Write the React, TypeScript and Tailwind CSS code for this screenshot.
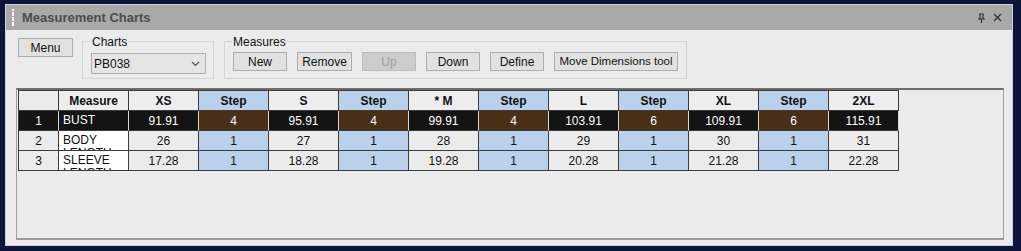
import React from "react";

const font = { fontFamily: '"Liberation Sans", Arial, sans-serif' };

const cols = ["XS", "Step", "S", "Step", "* M", "Step", "L", "Step", "XL", "Step", "2XL"];
const rows = [
  { n: "1", m: "BUST", v: ["91.91", "4", "95.91", "4", "99.91", "4", "103.91", "6", "109.91", "6", "115.91"], sel: true },
  { n: "2", m: "BODY LENGTH", v: ["26", "1", "27", "1", "28", "1", "29", "1", "30", "1", "31"], sel: false },
  { n: "3", m: "SLEEVE LENGTH", v: ["17.28", "1", "18.28", "1", "19.28", "1", "20.28", "1", "21.28", "1", "22.28"], sel: false },
];

function Btn({ label, w, disabled, small }: { label: string; w: string; disabled?: boolean; small?: boolean }) {
  return (
    <div
      className={`${w} h-[19px] flex items-center justify-center border ${small ? "text-[11.5px]" : "text-[12px]"} ${
        disabled ? "bg-[#cccccc] border-[#bfbfbf] text-[#a0a0a0]" : "bg-[#e1e1e1] border-[#adadad] text-[#111]"
      }`}
    >
      {label}
    </div>
  );
}

export default function App() {
  return (
    <div className="w-[1021px] h-[251px] bg-[#0d1638] pl-[5px] pt-[4px] overflow-hidden" style={font}>
      <div className="w-[1008px] h-[242px] border border-[#c8d0e8] bg-[#ebebeb] flex flex-col">
        {/* title bar */}
        <div className="h-[25px] bg-[#a9a9a9] flex items-center relative">
          <div className="ml-[6px] w-[2px] h-[19px] flex flex-col justify-between py-[1px]">
            {Array.from({ length: 7 }).map((_, i) => (
              <div key={i} className="w-[2px] h-[2px] bg-white" />
            ))}
          </div>
          <div className="ml-[8px] text-[13px] font-bold text-[#4d4d4d]">Measurement Charts</div>
          <div className="ml-auto mr-[10px] flex items-center gap-[7px]">
            <svg width="9" height="10" viewBox="0 0 9 10">
              <path d="M2 1h5M3 1v5M6 1v5M1 6h7M4.5 6v4" stroke="#333" strokeWidth="1.2" fill="none" />
            </svg>
            <svg width="9" height="9" viewBox="0 0 9 9">
              <path d="M1 1L8 8M8 1L1 8" stroke="#333" strokeWidth="1.4" />
            </svg>
          </div>
        </div>
        {/* toolbar */}
        <div className="flex items-start pl-[12px] pt-[8px] h-[58px]">
          <Btn label="Menu" w="w-[55px]" />
          <div className="relative ml-[9px] mt-[3px] w-[132px] h-[38px] border border-[#d6d6d6]">
            <div className="absolute left-[8px] top-[-6px] px-[1px] bg-[#ebebeb] text-[12px] text-[#111] leading-[13px]">Charts</div>
            <div className="absolute left-[8px] top-[11px] w-[115px] h-[21px] border border-[#acacac] bg-[#e5e5e5] flex items-center pl-[2px] text-[12px] text-[#111]">
              PB038
              <svg className="ml-auto mr-[5px]" width="9" height="6" viewBox="0 0 9 6">
                <path d="M1 1l3.5 3.5L8 1" stroke="#555" strokeWidth="1.2" fill="none" />
              </svg>
            </div>
          </div>
          <div className="relative ml-[10px] mt-[3px] w-[463px] h-[38px] border border-[#d6d6d6]">
            <div className="absolute left-[7px] top-[-6px] px-[1px] bg-[#ebebeb] text-[12px] text-[#111] leading-[13px]">Measures</div>
            <div className="absolute left-[8px] top-[10px] flex gap-[10px]">
              <Btn label="New" w="w-[54px]" />
              <Btn label="Remove" w="w-[55px]" />
              <Btn label="Up" w="w-[54px]" disabled />
              <Btn label="Down" w="w-[54px]" />
              <Btn label="Define" w="w-[54px]" />
              <Btn label="Move Dimensions tool" w="w-[124px]" small />
            </div>
          </div>
        </div>
        {/* grid */}
        <div className="ml-[10px] w-[988px] h-[152px] border-t-2 border-t-[#6e6e6e] border-l border-l-[#a0a0a0] border-r border-r-[#a0a0a0] border-b-2 border-b-[#9a9a9a] bg-[#ebebeb] pl-[1px]">
          <div className="inline-flex flex-col border-l border-t border-[#3a3a3a] text-[12px] text-[#111]">
            <div className="flex h-[20px]">
              <div className="w-[40px] border-r border-b border-[#3a3a3a] bg-[#ebebeb]" />
              <div className="w-[70px] border-r border-b border-[#3a3a3a] bg-[#ededed] flex items-center justify-center font-bold">Measure</div>
              {cols.map((c, i) => (
                <div
                  key={i}
                  className={`w-[70px] border-r border-b border-[#3a3a3a] flex items-center justify-center font-bold ${
                    c === "Step" ? "bg-[#b9d1ea]" : "bg-[#ededed]"
                  }`}
                >
                  {c}
                </div>
              ))}
            </div>
            {rows.map((r) => (
              <div key={r.n} className="flex h-[20px]">
                <div
                  className={`w-[40px] border-r border-b flex items-center justify-center ${
                    r.sel ? "bg-[#141414] text-white border-r-[#d8d8d8] border-b-[#3a3a3a]" : "bg-[#ebebeb] border-[#3a3a3a]"
                  }`}
                >
                  {r.n}
                </div>
                <div
                  className={`w-[70px] border-r border-b overflow-hidden pl-[4px] leading-[13px] pt-[3px] ${
                    r.sel ? "bg-[#141414] text-white border-r-[#d8d8d8] border-b-[#3a3a3a]" : "bg-white border-[#3a3a3a]"
                  }`}
                >
                  {r.m}
                </div>
                {r.v.map((v, i) => {
                  const step = i % 2 === 1;
                  const cls = r.sel
                    ? step
                      ? "bg-[#4a2f17] text-white border-r-[#d8d8d8] border-b-[#3a3a3a]"
                      : "bg-[#141414] text-white border-r-[#d8d8d8] border-b-[#3a3a3a]"
                    : step
                    ? "bg-[#b9d1ea] border-[#3a3a3a]"
                    : "bg-[#ebebeb] border-[#3a3a3a]";
                  return (
                    <div key={i} className={`w-[70px] border-r border-b flex items-center justify-center ${cls}`}>
                      {v}
                    </div>
                  );
                })}
              </div>
            ))}
          </div>
        </div>
      </div>
    </div>
  );
}
